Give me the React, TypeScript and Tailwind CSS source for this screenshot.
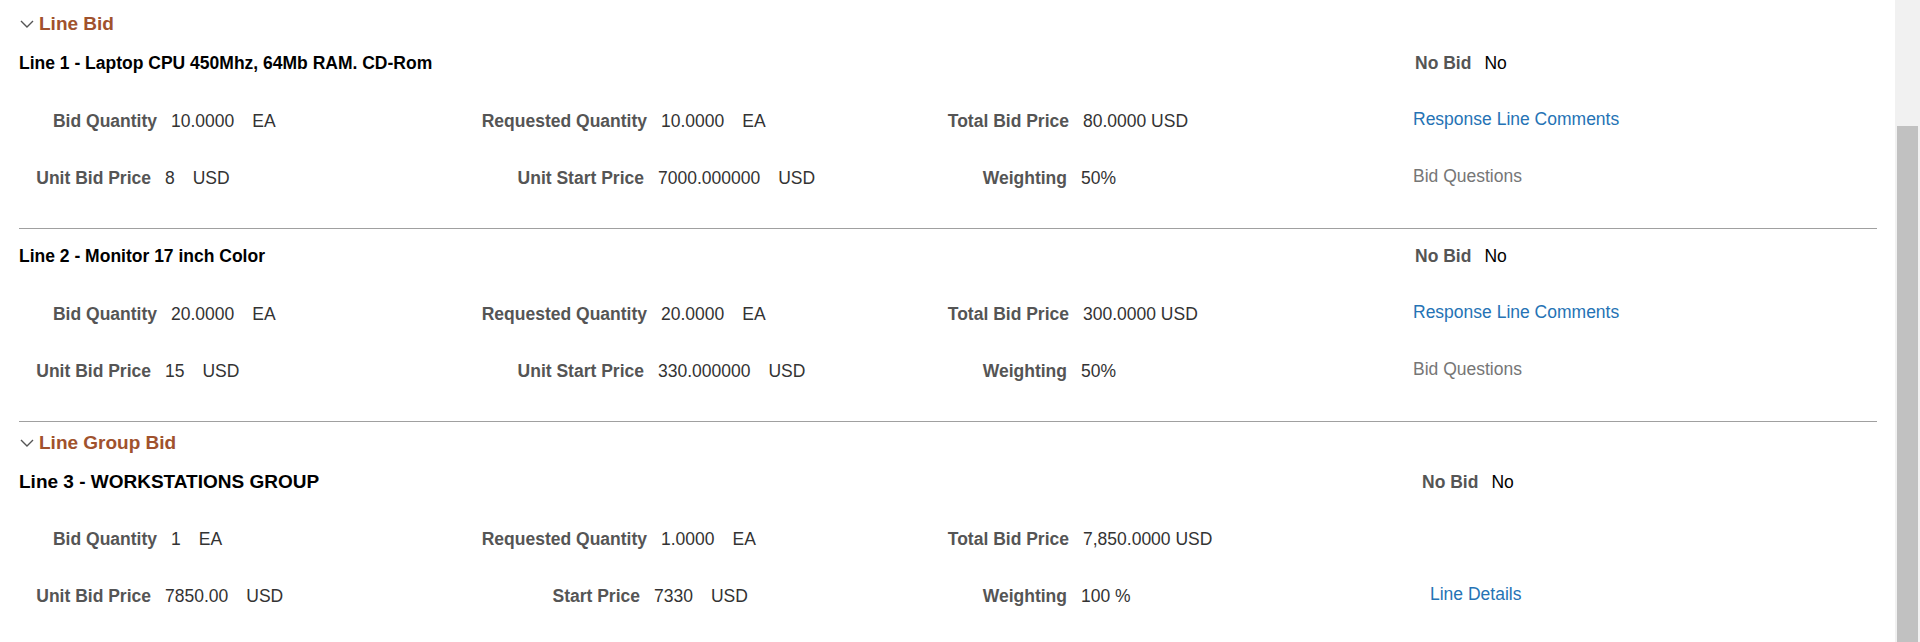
import React from 'react';

type Field = { label: string; value: string; unit?: string; w: string };
type Extra = { text: string; kind: 'link' | 'muted'; pad: string } | null;

type Line = {
  title: string;
  titleSize: string;
  noBidPad: string;
  top: Field[];
  bottom: Field[];
  topExtra: Extra;
  bottomExtra: Extra;
};

const LINE_BIDS: Line[] = [
  {
    title: 'Line 1 - Laptop CPU 450Mhz, 64Mb RAM. CD-Rom',
    titleSize: 'text-[17.5px]',
    noBidPad: 'pl-[5px]',
    top: [
      { label: 'Bid Quantity', value: '10.0000', unit: 'EA', w: 'w-[138px]' },
      { label: 'Requested Quantity', value: '10.0000', unit: 'EA', w: 'w-[317px]' },
      { label: 'Total Bid Price', value: '80.0000 USD', w: 'w-[239px]' },
    ],
    bottom: [
      { label: 'Unit Bid Price', value: '8', unit: 'USD', w: 'w-[132px]' },
      { label: 'Unit Start Price', value: '7000.000000', unit: 'USD', w: 'w-[314px]' },
      { label: 'Weighting', value: '50%', w: 'w-[237px]' },
    ],
    topExtra: { text: 'Response Line Comments', kind: 'link', pad: 'pl-[3px]' },
    bottomExtra: { text: 'Bid Questions', kind: 'muted', pad: 'pl-[3px]' },
  },
  {
    title: 'Line 2 - Monitor 17 inch Color',
    titleSize: 'text-[17.5px]',
    noBidPad: 'pl-[5px]',
    top: [
      { label: 'Bid Quantity', value: '20.0000', unit: 'EA', w: 'w-[138px]' },
      { label: 'Requested Quantity', value: '20.0000', unit: 'EA', w: 'w-[317px]' },
      { label: 'Total Bid Price', value: '300.0000 USD', w: 'w-[239px]' },
    ],
    bottom: [
      { label: 'Unit Bid Price', value: '15', unit: 'USD', w: 'w-[132px]' },
      { label: 'Unit Start Price', value: '330.000000', unit: 'USD', w: 'w-[314px]' },
      { label: 'Weighting', value: '50%', w: 'w-[237px]' },
    ],
    topExtra: { text: 'Response Line Comments', kind: 'link', pad: 'pl-[3px]' },
    bottomExtra: { text: 'Bid Questions', kind: 'muted', pad: 'pl-[3px]' },
  },
];

const GROUP_BIDS: Line[] = [
  {
    title: 'Line 3 - WORKSTATIONS GROUP',
    titleSize: 'text-[19px]',
    noBidPad: 'pl-[12px]',
    top: [
      { label: 'Bid Quantity', value: '1', unit: 'EA', w: 'w-[138px]' },
      { label: 'Requested Quantity', value: '1.0000', unit: 'EA', w: 'w-[317px]' },
      { label: 'Total Bid Price', value: '7,850.0000 USD', w: 'w-[239px]' },
    ],
    bottom: [
      { label: 'Unit Bid Price', value: '7850.00', unit: 'USD', w: 'w-[132px]' },
      { label: 'Start Price', value: '7330', unit: 'USD', w: 'w-[310px]' },
      { label: 'Weighting', value: '100 %', w: 'w-[237px]' },
    ],
    topExtra: null,
    bottomExtra: { text: 'Line Details', kind: 'link', pad: 'pl-[20px]' },
  },
];

function Chevron() {
  return (
    <svg width="14" height="8" viewBox="0 0 14 8" className="ml-[1px] shrink-0">
      <path d="M1 1 L7 7 L13 1" fill="none" stroke="#555555" strokeWidth="1.4" />
    </svg>
  );
}

function SectionHeader({ text, className }: { text: string; className: string }) {
  return (
    <div className={`flex h-[30px] items-center pt-[2px] ${className}`}>
      <Chevron />
      <span className="ml-[5px] text-[19px] font-bold text-[#a0522d]">{text}</span>
    </div>
  );
}

function FieldCell({ f }: { f: Field }) {
  return (
    <div className="flex items-center whitespace-nowrap">
      <span className={`${f.w} shrink-0 text-right font-bold text-[#555555]`}>{f.label}</span>
      <span className="ml-[14px] text-[#333333]">{f.value}</span>
      {f.unit && <span className="ml-[18px] text-[#333333]">{f.unit}</span>}
    </div>
  );
}

function ExtraCell({ e }: { e: Extra }) {
  if (!e) return <div />;
  return (
    <div className={`flex items-center pb-[3px] ${e.pad}`}>
      <span className={e.kind === 'link' ? 'text-[#2573b5]' : 'text-[#767676]'}>{e.text}</span>
    </div>
  );
}

function LineBlock({ line }: { line: Line }) {
  return (
    <div>
      <div className="grid h-[28px] grid-cols-[1391px_1fr] items-center pt-[2px]">
        <span className={`${line.titleSize} font-bold text-black`}>{line.title}</span>
        <div className={`flex items-center ${line.noBidPad}`}>
          <span className="font-bold text-[#555555]">No Bid</span>
          <span className="ml-[13px] text-black">No</span>
        </div>
      </div>
      <div className="mt-[24px] grid h-[40px] grid-cols-[311px_500px_580px_1fr] items-center pt-[2px]">
        {line.top.map((f) => (
          <FieldCell key={f.label} f={f} />
        ))}
        <ExtraCell e={line.topExtra} />
      </div>
      <div className="mt-[17px] grid h-[40px] grid-cols-[311px_500px_580px_1fr] items-center pt-[2px]">
        {line.bottom.map((f) => (
          <FieldCell key={f.label} f={f} />
        ))}
        <ExtraCell e={line.bottomExtra} />
      </div>
      <div className="mt-[31px] mb-[12px] h-px bg-[#a0a0a0]" />
    </div>
  );
}

export default function App() {
  return (
    <div className="flex h-[642px] w-full overflow-hidden bg-white font-['Liberation_Sans',Arial,sans-serif] text-[17.5px] leading-normal">
      <div className="min-w-0 flex-1 pt-[8px] pl-[19px] pr-[18px]">
        <SectionHeader text="Line Bid" className="mb-[10px]" />
        {LINE_BIDS.map((l) => (
          <LineBlock key={l.title} line={l} />
        ))}
        <SectionHeader text="Line Group Bid" className="-mt-[7px] mb-[9px]" />
        {GROUP_BIDS.map((l) => (
          <LineBlock key={l.title} line={l} />
        ))}
      </div>
      {/* page scrollbar */}
      <div className="flex w-[25px] shrink-0 flex-col bg-[#f1f1f1] px-[2px] pt-[126px]">
        <div className="flex-1 bg-[#c1c1c1]" />
      </div>
    </div>
  );
}
